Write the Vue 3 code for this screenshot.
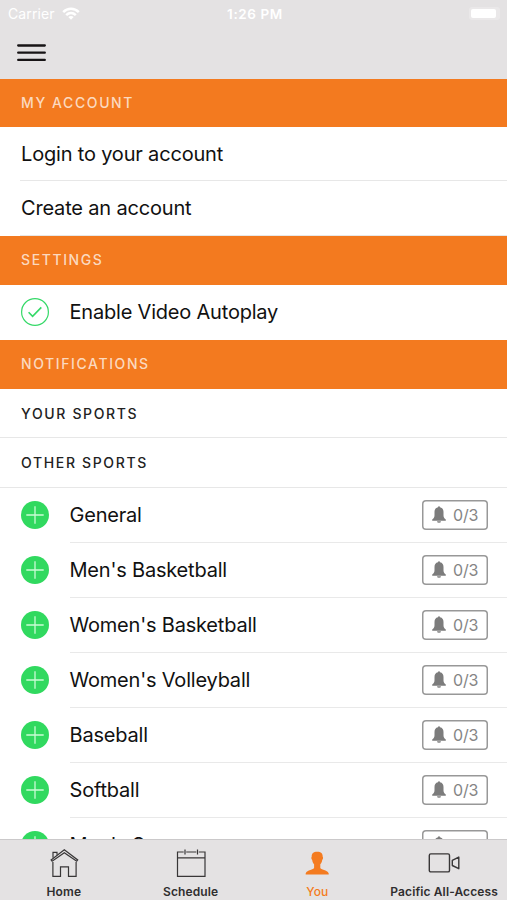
<template>
  <div class="screen">
    <header class="top">
      <div class="status">
        <div class="carrier">
          <span>Carrier</span>
          <svg width="18" height="13" viewBox="0 0 18 13" fill="none" stroke="#fff" stroke-width="2.5">
            <path d="M1.2 5.2C5.7.7 12.3.7 16.8 5.2" />
            <path d="M4.2 8.2c2.9-2.8 6.7-2.8 9.6 0" />
            <path d="M6.3 10.1c1.6-1.5 3.8-1.5 5.4 0L9 12.8z" fill="#fff" stroke="none" />
          </svg>
        </div>
        <span class="time">1:26 PM</span>
        <div class="battery"><i></i></div>
      </div>
      <svg class="menu" viewBox="0 0 29 19" stroke="#171416" stroke-width="2.3" stroke-linecap="round">
        <path d="M1.2 2.5h26.6M1.2 9.7h26.6M1.2 16.9h26.6" />
      </svg>
    </header>

    <main class="list">
      <h2 class="section account">My Account</h2>
      <div v-for="item in accountLinks" :key="item" class="link"><span>{{ item }}</span></div>

      <h2 class="section">Settings</h2>
      <div class="setting">
        <svg class="icon" viewBox="0 0 28 28" fill="none" stroke="#35d968">
          <circle cx="14" cy="14" r="13.4" stroke-width="1.2" />
          <path d="M7.6 14.2l4 4.2 8.7-9" stroke-width="1.6" />
        </svg>
        <span>Enable Video Autoplay</span>
      </div>

      <h2 class="section">Notifications</h2>
      <h3 class="subsection">Your Sports</h3>
      <h3 class="subsection">Other Sports</h3>

      <div v-for="sport in sports" :key="sport" class="sport">
        <svg class="icon" viewBox="0 0 28 28">
          <circle cx="14" cy="14" r="14" fill="#31d95f" />
          <path d="M14 5.3v17.4M5.3 14h17.4" stroke="#cafbd5" stroke-width="1.3" />
        </svg>
        <div class="sport-body">
          <span>{{ sport }}</span>
          <div class="badge">
            <svg width="14" height="17" viewBox="0 0 14 17" fill="#7c7c7c">
              <path d="M6 1.3a1 1 0 0 1 2 0C10.5 1.8 11.5 3.7 11.5 6v3.2c0 2.2.9 3.3 2.3 4.3v1.3H.2v-1.3c1.4-1 2.3-2.1 2.3-4.3V6C2.5 3.7 3.5 1.8 6 1.3zM5 15.3h4a2 1.5 0 0 1-4 0z" />
            </svg>
            <span>0/3</span>
          </div>
        </div>
      </div>
    </main>

    <nav class="tabs">
      <div v-for="tab in tabs" :key="tab.name" class="tab" :class="{ active: tab.name === activeTab }">
        <svg v-if="tab.icon === 'home'" width="30" height="30" viewBox="0 0 30 30" fill="none" stroke="#383637" stroke-width="1.2">
          <path d="M3.9 14V28.3H11.5V18.8H19.5V28.3H27.1V14" />
          <path d="M2.1 11.9 15.3 1.8 28.7 11.9 27.7 13.2 15.3 4.7 3.1 13.2z" />
          <path d="M4 9.8V4.3H8V6.8M3.6 4.3H8.4" />
        </svg>
        <svg v-else-if="tab.icon === 'calendar'" width="30" height="30" viewBox="0 0 30 30" fill="none" stroke="#383637" stroke-width="1.2">
          <path d="M7.7 4H1.5V28.3H29V4H22.8M10.2 4H20.3M1.5 9.9H29M9 1.5V6.5M21.5 1.5V6.5" />
        </svg>
        <svg v-else-if="tab.icon === 'user'" width="30" height="30" viewBox="0 0 30 30" fill="#f47b20">
          <path d="M15.2 3.7c-3.8 0-5.7 1.9-5.5 5.1-.7.7-.3 2.6.5 3.3.3 2.2.9 3.2 1.9 4.2v3.5c-.2 2.3-7.1 2-8.3 5.5-.3.8-.2 1.2.2 1.2h22.4c.4 0 .5-.4.2-1.2-1.2-3.5-8.1-3.2-8.3-5.5v-3.5c1-1 1.6-2 1.9-4.2.8-.7 1.2-2.6.5-3.3.2-3.2-1.7-5.1-5.5-5.1z" />
        </svg>
        <svg v-else width="32" height="30" viewBox="0 0 32 30" fill="none" stroke="#383637" stroke-width="1.4" stroke-linejoin="round">
          <rect x="1.3" y="5.9" width="20.2" height="18" rx="1.5" />
          <path d="M24.3 12.3 30.8 9.1V20.7L24.3 17.5z" />
        </svg>
        <span>{{ tab.name }}</span>
      </div>
    </nav>
  </div>
</template>

<script setup>
import { ref } from 'vue'

const accountLinks = ['Login to your account', 'Create an account']

const sports = [
  'General',
  "Men's Basketball",
  "Women's Basketball",
  "Women's Volleyball",
  'Baseball',
  'Softball',
  "Men's Soccer"
]

const tabs = [
  { name: 'Home', icon: 'home' },
  { name: 'Schedule', icon: 'calendar' },
  { name: 'You', icon: 'user' },
  { name: 'Pacific All-Access', icon: 'video' }
]

const activeTab = ref('You')
</script>

<style>
body {
  margin: 0;
  background: #fff;
}
</style>

<style scoped>
* {
  box-sizing: border-box;
}

.screen {
  display: flex;
  flex-direction: column;
  height: 900px;
  overflow: hidden;
  background: #fff;
  color: #111;
  font-family: Inter, "Liberation Sans", sans-serif;
}

.top {
  flex: none;
  height: 79px;
  background: #e4e2e3;
}

.status {
  display: grid;
  grid-template-columns: 1fr auto 1fr;
  align-items: center;
  height: 27px;
  padding: 0 7px 0 8px;
  color: #fff;
  font-size: 14px;
}

.carrier {
  display: flex;
  align-items: center;
  gap: 7px;
  letter-spacing: 0.1px;
}

.time {
  padding-left: 2px;
  font-weight: 600;
  font-size: 13.5px;
  letter-spacing: 0.6px;
}

.battery {
  justify-self: end;
  width: 31px;
  height: 13px;
  padding: 2px 4px 2px 2px;
  border-radius: 3px;
  background: #eae8e9;
}

.battery i {
  display: block;
  height: 9px;
  border-radius: 2px;
  background: #fff;
}

.menu {
  display: block;
  width: 29px;
  height: 19px;
  margin: 16px 0 0 17px;
}

.list {
  flex: 1;
  min-height: 0;
  overflow: hidden;
}

.section,
.subsection {
  display: flex;
  align-items: center;
  margin: 0;
  padding-left: 21px;
  font-size: 14px;
  font-weight: 500;
  text-transform: uppercase;
}

.section {
  height: 49px;
  padding-bottom: 1px;
  background: #f37a1f;
  color: #fbd9bf;
  letter-spacing: 1.6px;
}

.section.account {
  height: 48px;
}

.subsection {
  height: 49.5px;
  padding-top: 1px;
  border-bottom: 1px solid #e7e7e7;
  letter-spacing: 1.65px;
  color: #222;
}

.link {
  display: flex;
  align-items: center;
  height: 54.3px;
  margin-left: 20px;
  padding: 1px 0 0 1px;
  border-bottom: 1px solid #e7e7e7;
  font-size: 20px;
  letter-spacing: -0.18px;
}

.setting,
.sport {
  display: flex;
  align-items: center;
  height: 55px;
  padding-left: 20.5px;
  gap: 21px;
  font-size: 20px;
  letter-spacing: -0.2px;
}

.icon {
  flex: none;
  width: 28px;
  height: 28px;
}

.sport-body {
  display: flex;
  flex: 1;
  align-items: center;
  justify-content: space-between;
  height: 55px;
  padding-right: 19px;
  border-bottom: 1px solid #e9e9e9;
}

.badge {
  display: flex;
  align-items: center;
  gap: 7.5px;
  width: 66px;
  height: 30px;
  padding-left: 9.5px;
  border-radius: 4px;
  box-shadow: inset 0 0 0 1.5px #989898;
  color: #858585;
  font-size: 16px;
}

.badge svg {
  margin-top: -1px;
}

.tabs {
  display: flex;
  flex: none;
  height: 61px;
  border-top: 1px solid #cbc9ca;
  background: #e4e2e3;
}

.tab {
  display: flex;
  flex: 1 1 0;
  flex-direction: column;
  align-items: center;
  min-width: 0;
  padding: 8px 0 0 1px;
  color: #302e2f;
  font-size: 12px;
  font-weight: 600;
  line-height: 15px;
  letter-spacing: 0.12px;
  white-space: nowrap;
}

.tab span {
  margin-top: 6px;
}

.tab.active {
  color: #f47b20;
  font-weight: 500;
}
</style>
